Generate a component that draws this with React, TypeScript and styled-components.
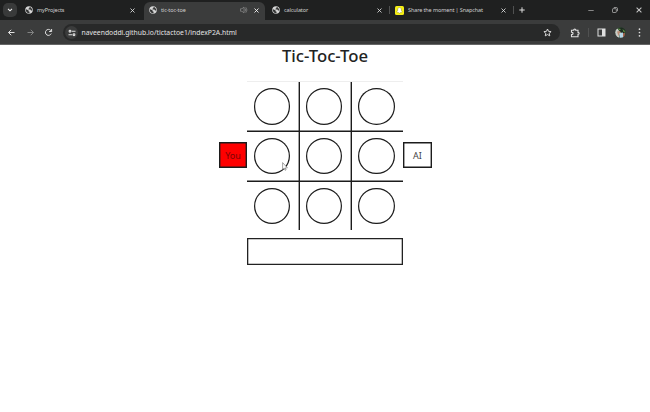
import React from "react";
import styled, { createGlobalStyle } from "styled-components";

const GlobalStyle = createGlobalStyle`
  * { box-sizing: border-box; }
  html, body { margin: 0; background: #fff; overflow: hidden; }
  body { font-family: "Noto Sans", "Open Sans", sans-serif; color: #222; }
  svg { display: block; flex: none; }
`;

const Window = styled.div`
  width: 650px;
  height: 412px;
  display: flex;
  flex-direction: column;
`;

const TabStrip = styled.div`
  height: 20px;
  flex: none;
  display: flex;
  align-items: stretch;
  background: #1f2020;
  padding-left: 3px;
`;

const TabSearch = styled.div`
  width: 14px;
  height: 14px;
  margin: 3px 7px 0 0;
  border-radius: 5px;
  background: #393a3a;
  display: grid;
  place-items: center;
`;

const Tab = styled.div<{ $w: number; $active?: boolean }>`
  width: ${(p) => p.$w}px;
  display: flex;
  align-items: center;
  background: ${(p) => (p.$active ? "#3b3c3c" : "transparent")};
  border-radius: 6px 6px 0 0;
  margin-top: ${(p) => (p.$active ? 2 : 0)}px;
  padding-bottom: ${(p) => (p.$active ? 2 : 0)}px;
`;

const TabTitle = styled.span`
  flex: 1;
  margin-left: 4px;
  font-size: 5.5px;
  line-height: 10px;
  letter-spacing: -0.12px;
  color: #cfcfcf;
  white-space: nowrap;
`;

const Spacer = styled.span<{ $w: number }>`
  width: ${(p) => p.$w}px;
  flex: none;
`;

const Divider = styled.span<{ $h: number }>`
  width: 1px;
  height: ${(p) => p.$h}px;
  align-self: center;
  background: #505151;
`;

const WindowControls = styled.div`
  margin-left: auto;
  padding-right: 8px;
  display: flex;
  align-items: center;
  gap: 18px;
`;

const Toolbar = styled.div`
  height: 25px;
  flex: none;
  display: flex;
  align-items: center;
  padding: 1px 9px 0 7px;
  background: #3b3c3c;
  border-bottom: 1px solid #656666;
`;

const NavButtons = styled.div`
  width: 56px;
  display: flex;
  align-items: center;
  gap: 9.7px;
`;

const AddressBar = styled.div`
  width: 497px;
  height: 17px;
  border-radius: 9px;
  background: #282929;
  display: flex;
  align-items: center;
  padding: 0 8px 0 2px;
`;

const SiteInfo = styled.div`
  width: 13px;
  height: 13px;
  border-radius: 50%;
  background: #3b3c3c;
  display: grid;
  place-items: center;
`;

const Url = styled.span`
  flex: 1;
  margin-left: 3.5px;
  padding-top: 1px;
  font-size: 6.82px;
  line-height: 12px;
  color: #e3e3e3;
  white-space: nowrap;
`;

const Actions = styled.div`
  margin-left: auto;
  display: flex;
  align-items: center;
`;

const Page = styled.main`
  flex: 1;
  display: flex;
  flex-direction: column;
  align-items: center;
  background: #fff;
`;

const Title = styled.h1`
  margin: 0;
  height: 36px;
  font-size: 16.7px;
  line-height: 21px;
  font-weight: 500;
`;

const Match = styled.section`
  display: flex;
  align-items: center;
  height: 149px;
  padding-left: 1px;
`;

const Player = styled.div<{ $turn?: boolean }>`
  width: ${(p) => (p.$turn ? 28 : 29)}px;
  height: 26px;
  margin-bottom: 1px;
  box-shadow: inset 0 0 0 1.4px #1c1c1c;
  background: ${(p) => (p.$turn ? "#fe0000" : "#fff")};
  color: ${(p) => (p.$turn ? "#7a0505" : "#444")};
  font-size: 9px;
  line-height: 28px;
  text-align: center;
`;

const Board = styled.div`
  position: relative;
  width: 156px;
  height: 149px;
  display: grid;
  grid-template-columns: 53px 52px 51px;
  grid-template-rows: 50px 50px 48px;
  border-top: 1px solid #eee;
`;

const Cell = styled.div<{ $col: number; $row: number }>`
  display: flex;
  padding: ${(p) => (p.$row ? 5.5 : 6)}px 0 0 ${(p) => [6.5, 5.6, 6.2][p.$col]}px;
  border-right: ${(p) => (p.$col < 2 ? "1px solid #1c1c1c" : "0")};
  border-bottom: ${(p) => (p.$row < 2 ? "1px solid #1c1c1c" : "0")};
  box-shadow: inset ${(p) => (p.$col < 2 ? -0.4 : 0)}px ${(p) => (p.$row < 2 ? -0.4 : 0)}px 0 #1c1c1c;
`;

const Circle = styled.div`
  width: 36.5px;
  height: 36.5px;
  flex: none;
  box-shadow: inset 0 0 0 1.2px #1c1c1c;
  border-radius: 50%;
`;

const Pointer = styled.svg`
  position: absolute;
  left: 35px;
  top: 80px;
`;

const Message = styled.div`
  width: 156px;
  height: 27px;
  margin-top: 8px;
  box-shadow: inset 0 0 0 1.3px #222;
`;

const Globe = () => (
  <svg width="8" height="8" viewBox="0 0 16 16">
    <circle cx="8" cy="8" r="7.5" fill="#d6d6d6" />
    <path d="M2 6.5 7 8.5v2l2 1v2.8C5 14.8 1.6 12 1.8 8ZM6 2.2l3-.4 0 2.2-2 1.3v1.6h4l1 2h2.2C14.8 5.3 12 2 9 1.8Z" fill="#333434" />
  </svg>
);

const Close = ({ size = 5, color = "#dedede" }: { size?: number; color?: string }) => (
  <svg width={size} height={size} viewBox="0 0 5 5" stroke={color} strokeWidth=".85">
    <path d="m.5.5 4 4m0-4-4 4" />
  </svg>
);

const Speaker = () => (
  <svg width="8" height="8" viewBox="0 0 16 16" fill="none" stroke="#8c8d8d" strokeWidth="1.4">
    <path d="M1 5.5h3L8 2v12L4 10.5H1ZM10 5q2.5 3 0 6M11.5 2.5q5 5.5 0 11" />
  </svg>
);

const Ghost = () => (
  <svg width="9" height="9" viewBox="0 0 18 18">
    <rect width="18" height="18" rx="3" fill="#f4ee16" />
    <path
      d="M9 3.2c-2.5 0-3.6 1.7-3.5 4.2l-1.3.4 1.3 1c-.4 1.3-1.3 2.2-2.3 2.5l1.8 1 .4 1 1.7-.1L9 14.6l1.9-1.4 1.7.1.4-1 1.8-1c-1-.3-1.9-1.2-2.3-2.5l1.3-1-1.3-.4C12.6 4.9 11.5 3.2 9 3.2Z"
      fill="#fff"
      stroke="#77740d"
      strokeWidth=".7"
    />
  </svg>
);

const Arrow = ({ forward = false }: { forward?: boolean }) => (
  <svg width="9" height="9" viewBox="0 0 18 18" fill="none" stroke={forward ? "#828383" : "#e0e0e0"} strokeWidth="2">
    <path d={forward ? "M3 9h12M9.5 3.5 15 9l-5.5 5.5" : "M15 9H3M8.5 3.5 3 9l5.5 5.5"} />
  </svg>
);

const Reload = () => (
  <svg width="9" height="9" viewBox="0 0 18 18" fill="none" stroke="#e0e0e0" strokeWidth="2">
    <path d="M14.5 11a6 6 0 1 1-1.2-6.3L15 6.5M15.2 2v5h-5" />
  </svg>
);

const Tune = () => (
  <svg width="8" height="8" viewBox="0 0 16 16" fill="none" stroke="#dedede" strokeWidth="2.2">
    <circle cx="4" cy="4.5" r="1.8" />
    <path d="M7.5 4.5H15M1 11.5h7.5" />
    <circle cx="12" cy="11.5" r="1.8" />
  </svg>
);

const Star = () => (
  <svg width="9" height="9" viewBox="0 0 18 18" fill="none" stroke="#dedede" strokeWidth="1.9">
    <path d="m9 2 2.1 4.7 5.1.5-3.8 3.5 1.1 5L9 13.1l-4.5 2.6 1.1-5-3.8-3.5 5.1-.5Z" />
  </svg>
);

const Puzzle = () => (
  <svg width="10" height="10" viewBox="0 0 20 20" fill="none" stroke="#dedede" strokeWidth="2.2">
    <path d="M3 4.5h4.5c-.5-3 4.5-3 4 0H16v4.3c3-.5 3 4.400 0 4V17.500H3v-4.500c4 .5 4-5 0-4.500Z" />
  </svg>
);

const SidePanel = () => (
  <svg width="9" height="9" viewBox="0 0 18 18">
    <rect x="2" y="2" width="14" height="14" fill="none" stroke="#e0e0e0" strokeWidth="2" />
    <path d="M10 2h6v14h-6Z" fill="#e0e0e0" />
  </svg>
);

const Avatar = () => (
  <svg width="11" height="11" viewBox="0 0 22 22">
    <clipPath id="face"><circle cx="11" cy="11" r="10.5" /></clipPath>
    <g clipPath="url(#face)">
      <path fill="#2c4a30" d="M0 0h22v22H0Z" />
      <path fill="#c9ccc8" d="M0 6 5 3l4 5-1 14H0Z" />
      <path fill="#1d2b20" d="m7 3 7-3 8 6-4 7-10-4Z" />
      <path fill="#5d9143" d="m6 3 6 1-3 3Zm9 1 6 5-4 1Z" />
      <path fill="#ba8d75" d="m4 9 6-1 2 4-5 6Z" />
      <path fill="#b5d5e5" d="m9 12 7-1 1 13H9Z" />
      <path fill="#a8614f" d="m16 13 4-2-1 9-3 1Z" />
    </g>
  </svg>
);

const cells = Array.from({ length: 9 }, (_, i) => i);

export default function App() {
  return (
    <>
      <GlobalStyle />
      <Window>
        <TabStrip>
          <TabSearch>
            <svg width="6" height="4" viewBox="0 0 6 4" fill="none" stroke="#eee" strokeWidth="1.1">
              <path d="m1 .8 2 2 2-2" />
            </svg>
          </TabSearch>
          <Spacer $w={1} />
          <Tab $w={110}>
            <Globe />
            <TabTitle>myProjects</TabTitle>
            <Close />
          </Tab>
          <Spacer $w={9} />
          <Tab $w={121} $active>
            <Spacer $w={5} />
            <Globe />
            <TabTitle>tic-toc-toe</TabTitle>
            <Speaker />
            <Spacer $w={6} />
            <Close color="#fff" />
            <Spacer $w={6} />
          </Tab>
          <Spacer $w={7} />
          <Tab $w={110}>
            <Globe />
            <TabTitle>calculator</TabTitle>
            <Close />
          </Tab>
          <Spacer $w={7} />
          <Divider $h={8} />
          <Spacer $w={5} />
          <Tab $w={111}>
            <Ghost />
            <TabTitle>Share the moment | Snapchat</TabTitle>
            <Close />
          </Tab>
          <Spacer $w={7} />
          <Divider $h={8} />
          <Spacer $w={5} />
          <Tab $w={6}>
            <svg width="6" height="6" viewBox="0 0 6 6" stroke="#dedede" strokeWidth="1">
              <path d="M3 .3v5.4M.3 3h5.4" />
            </svg>
          </Tab>
          <WindowControls>
            <svg width="6" height="6" viewBox="0 0 6 6" stroke="#a2a2a2" strokeWidth=".8">
              <path d="M.3 3.5h5.4" />
            </svg>
            <svg width="6" height="6" viewBox="0 0 6 6" fill="none" stroke="#c2c2c2" strokeWidth=".7">
              <rect x=".5" y="1.7" width="3.8" height="3.8" rx=".6" />
              <path d="M1.8.5h2.5q1.2 0 1.2 1.2v2.5" />
            </svg>
            <Close size={6} color="#c8c8c8" />
          </WindowControls>
        </TabStrip>
        <Toolbar>
          <NavButtons>
            <Arrow />
            <Arrow forward />
            <Reload />
          </NavButtons>
          <AddressBar>
            <SiteInfo><Tune /></SiteInfo>
            <Url>naveendoddi.github.io/tictactoe1/indexP2A.html</Url>
            <Star />
          </AddressBar>
          <Actions>
            <Puzzle />
            <Spacer $w={8} />
            <Divider $h={9} />
            <Spacer $w={8} />
            <SidePanel />
            <Spacer $w={9} />
            <Avatar />
            <Spacer $w={12} />
            <svg width="3" height="9" viewBox="0 0 3 9" fill="#dedede">
              <circle cx="1.5" cy="1.2" r=".85" />
              <circle cx="1.5" cy="4.5" r=".85" />
              <circle cx="1.5" cy="7.8" r=".85" />
            </svg>
          </Actions>
        </Toolbar>
        <Page>
          <Title>Tic-Toc-Toe</Title>
          <Match>
            <Player $turn>You</Player>
            <Board>
              {cells.map((i) => (
                <Cell key={i} $col={i % 3} $row={Math.floor(i / 3)}>
                  <Circle />
                </Cell>
              ))}
              <Pointer width="6" height="9" viewBox="0 0 6 9">
                <path d="M.6.6v7l1.6-1.3.9 2 1-.5-.9-1.9h2.2Z" fill="#fff" stroke="#666" strokeWidth=".6" />
              </Pointer>
            </Board>
            <Player>AI</Player>
          </Match>
          <Message />
        </Page>
      </Window>
    </>
  );
}
